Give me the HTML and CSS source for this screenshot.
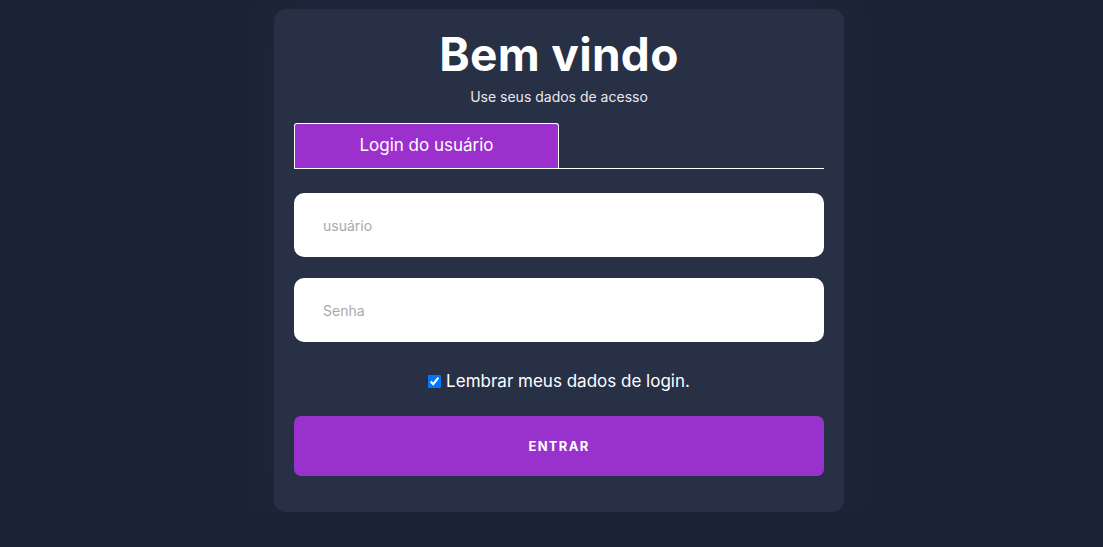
FILE: index.html
```html
<!DOCTYPE html>
<html lang="pt-BR">
<head>
    <meta charset="UTF-8">
    <meta name="viewport" content="width=device-width, initial-scale=1.0">
    <title>Login</title>
    <link rel="stylesheet" href="styles.css">
</head>
<body>

    <div class="login-card">
        <h1 class="titulo">Bem vindo</h1>
        <p class="subtitulo">Use seus dados de acesso</p>

        <div class="abas">
            <div class="aba ativa">Login do usuário</div>
        </div>

        <form class="form-login">
            <input class="campo" type="text" placeholder="usuário">
            <input class="campo" type="password" placeholder="Senha">

            <label class="lembrar">
                <input type="checkbox" checked>
                Lembrar meus dados de login.
            </label>

            <button class="btn-entrar" type="button">ENTRAR</button>
        </form>
    </div>

</body>
</html>
```

FILE: styles.css
```css
* {
    box-sizing: border-box;
}

body {
    margin: 0;
    padding-left: 15px;
    background-color: #1b2235;
    font-family: "Inter", "Noto Sans", sans-serif;
    color: #fff;
    display: flex;
    justify-content: center;
}

.login-card {
    width: 570px;
    margin-top: 9px;
    padding: 20px 20px 36px;
    background-color: #283045;
    border-radius: 12px;
    /* halo suave em volta do card */
    box-shadow: 0 0 40px 20px rgba(40, 46, 66, 0.35);
}

.titulo {
    margin: 0;
    font-size: 46px;
    line-height: 50px;
    font-weight: 700;
    letter-spacing: 0.3px;
    text-align: center;
}

.subtitulo {
    margin: 8px 0 0;
    font-size: 14px;
    line-height: 20px;
    text-align: center;
    color: #e9e9ee;
}

.abas {
    display: flex;
    margin-top: 16px;
    border-bottom: 1px solid #fff;
}

.aba {
    width: 265px;
    height: 45px;
    line-height: 42px;
    text-align: center;
    font-size: 17px;
    border: 1px solid #fff;
    border-bottom: none;
    border-radius: 3px 3px 0 0;
}

.aba.ativa {
    background-color: #9b30cc;
}

.form-login {
    display: flex;
    flex-direction: column;
    margin-top: 24px;
}

.campo {
    height: 64px;
    padding: 0 29px;
    margin-bottom: 21px;
    border: none;
    border-radius: 10px;
    background: #fff;
    font-family: inherit;
    font-size: 14px;
    color: #333;
    outline: none;
}

.campo::placeholder {
    color: #a9a9a9;
}

.lembrar {
    display: flex;
    align-items: center;
    justify-content: center;
    gap: 5px;
    margin-top: 7px;
    font-size: 17px;
    line-height: 22px;
}

.lembrar input {
    margin: 0;
    width: 13px;
    height: 13px;
}

.btn-entrar {
    height: 60px;
    margin-top: 24px;
    border: none;
    border-radius: 7px;
    background-color: #9932cc;
    color: #fff;
    font-family: inherit;
    font-size: 13px;
    font-weight: 700;
    letter-spacing: 1.3px;
    cursor: pointer;
}
```
